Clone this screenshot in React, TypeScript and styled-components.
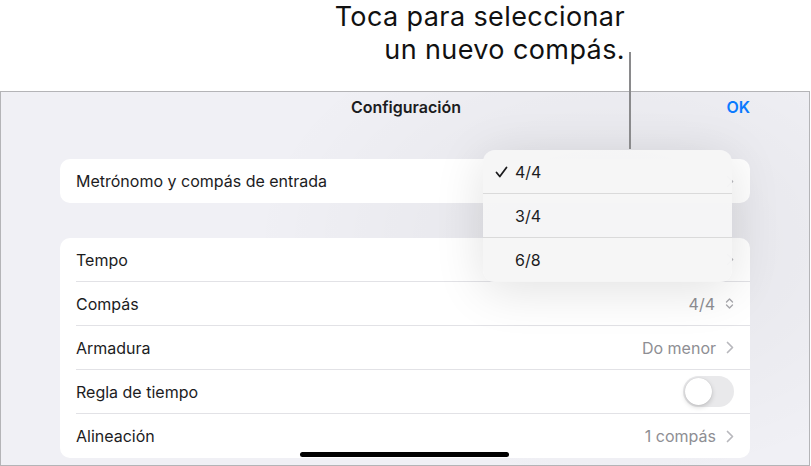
import React from "react";
import styled, { createGlobalStyle } from "styled-components";

const GlobalStyle = createGlobalStyle`
  html, body {
    margin: 0;
    padding: 0;
    background: #ffffff;
  }
  body {
    font-family: Inter, "Noto Sans", "Liberation Sans", sans-serif;
    -webkit-font-smoothing: antialiased;
  }
`;

const Page = styled.div`
  position: relative;
  width: 811px;
  height: 466px;
  overflow: hidden;
  display: flex;
  flex-direction: column;
`;

const Callout = styled.div`
  height: 91px;
  display: flex;
  justify-content: flex-end;
  padding-right: 186px;
  box-sizing: border-box;
`;

const CalloutText = styled.div`
  margin-top: 0px;
  font-family: Inter, "Liberation Sans", sans-serif;
  font-size: 27px;
  letter-spacing: 0.4px;
  line-height: 33px;
  color: #111111;
  text-align: right;
`;

const LeaderLine = styled.div`
  position: absolute;
  left: 629px;
  top: 52px;
  width: 2px;
  height: 97px;
  background: #8a8a8c;
  z-index: 3;
`;

const Panel = styled.div`
  position: relative;
  width: 810px;
  height: 375px;
  box-sizing: border-box;
  border: 1px solid #b4b4b7;
  background: radial-gradient(
      ellipse 360px 240px at 610px 150px,
      rgba(0, 0, 0, 0.05),
      rgba(0, 0, 0, 0) 100%
    ),
    #f0f0f5;
  display: flex;
  flex-direction: column;
  padding: 0 59px;
`;

const Header = styled.div`
  height: 30px;
  display: flex;
  align-items: center;
  justify-content: center;
  position: relative;
  margin: 0 -59px;
`;

const Title = styled.div`
  font-size: 16px;
  font-weight: 600;
  color: #1c1c1e;
  margin-left: 2px;
`;

const Done = styled.div`
  position: absolute;
  right: 59px;
  font-size: 16px;
  font-weight: 600;
  color: #0a7aff;
`;

const Card = styled.div<{ $top: number }>`
  margin-top: ${({ $top }) => $top}px;
  background: #ffffff;
  border-radius: 10px;
  overflow: hidden;
`;

const Row = styled.div<{ $last?: boolean }>`
  height: 44px;
  margin-left: 16px;
  padding-right: 16px;
  display: flex;
  align-items: center;
  justify-content: space-between;
  box-sizing: border-box;
  border-bottom: ${({ $last }) => ($last ? "none" : "1px solid #e2e2e6")};
  font-size: 16px;
  color: #1c1c1e;
`;

const Value = styled.div`
  display: flex;
  align-items: center;
  gap: 10px;
  color: #8e8e93;
  font-size: 16px;
`;

const Toggle = styled.div`
  width: 51px;
  height: 31px;
  border-radius: 16px;
  background: #e9e9eb;
  position: relative;
  &::after {
    content: "";
    position: absolute;
    left: 2px;
    top: 2px;
    width: 27px;
    height: 27px;
    border-radius: 50%;
    background: #ffffff;
    box-shadow: 0 2px 5px rgba(0, 0, 0, 0.18), 0 0 1px rgba(0, 0, 0, 0.15);
  }
`;

const Menu = styled.div`
  position: absolute;
  left: 482px;
  top: 58px;
  width: 249px;
  border-radius: 12px;
  background: rgba(246, 246, 246, 0.96);
  box-shadow: 0 8px 50px rgba(0, 0, 0, 0.12);
  overflow: hidden;
  z-index: 2;
`;

const MenuItem = styled.div<{ $last?: boolean }>`
  height: 44px;
  display: flex;
  align-items: center;
  padding-left: 12px;
  box-sizing: border-box;
  border-bottom: ${({ $last }) => ($last ? "none" : "1px solid #dadada")};
  font-size: 16px;
  color: #1c1c1e;
`;

const Check = styled.span`
  width: 20px;
  display: inline-flex;
  align-items: center;
`;

const HomeBar = styled.div`
  position: absolute;
  left: 300px;
  bottom: 9px;
  width: 209px;
  height: 5px;
  border-radius: 3px;
  background: #000000;
  z-index: 4;
`;

const Chevron = () => (
  <svg width="8" height="13" viewBox="0 0 8 13">
    <path d="M1.5 1.5 L6.5 6.5 L1.5 11.5" fill="none" stroke="#b8b8bd" strokeWidth="1.7" strokeLinecap="round" strokeLinejoin="round" />
  </svg>
);

const UpDown = () => (
  <svg width="9" height="13" viewBox="0 0 9 13">
    <path d="M1.5 5 L4.5 2 L7.5 5 M1.5 8 L4.5 11 L7.5 8" fill="none" stroke="#a8a8ad" strokeWidth="1.4" strokeLinecap="round" strokeLinejoin="round" />
  </svg>
);

const CheckMark = () => (
  <svg width="13" height="12" viewBox="0 0 13 12">
    <path d="M1.5 6.5 L4.8 10.5 L11.5 1.5" fill="none" stroke="#1c1c1e" strokeWidth="1.8" strokeLinecap="round" strokeLinejoin="round" />
  </svg>
);

export default function App() {
  return (
    <>
      <GlobalStyle />
      <Page>
        <Callout>
          <CalloutText>
            Toca para seleccionar
            <br />
            un nuevo compás.
          </CalloutText>
        </Callout>
        <LeaderLine />
        <Panel>
          <Header>
            <Title>Configuración</Title>
            <Done>OK</Done>
          </Header>
          <Card $top={37}>
            <Row $last>
              Metrónomo y compás de entrada
              <Value>
                <Chevron />
              </Value>
            </Row>
          </Card>
          <Card $top={35}>
            <Row>
              Tempo
              <Value>
                <Chevron />
              </Value>
            </Row>
            <Row>
              Compás
              <Value>
                4/4 <UpDown />
              </Value>
            </Row>
            <Row>
              Armadura
              <Value>
                Do menor <Chevron />
              </Value>
            </Row>
            <Row>
              Regla de tiempo
              <Toggle />
            </Row>
            <Row $last>
              Alineación
              <Value>
                1 compás <Chevron />
              </Value>
            </Row>
          </Card>
          <Menu>
            <MenuItem>
              <Check>
                <CheckMark />
              </Check>
              4/4
            </MenuItem>
            <MenuItem>
              <Check />
              3/4
            </MenuItem>
            <MenuItem $last>
              <Check />
              6/8
            </MenuItem>
          </Menu>
        </Panel>
        <HomeBar />
      </Page>
    </>
  );
}
